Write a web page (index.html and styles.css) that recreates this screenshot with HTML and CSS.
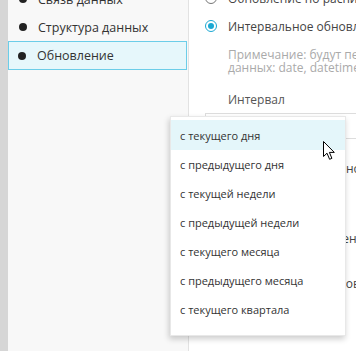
FILE: index.html
```html
<!DOCTYPE html>
<html lang="ru">
<head>
    <meta charset="UTF-8">
    <meta name="viewport" content="width=device-width, initial-scale=1.0">
    <title>Обновление</title>
    <link rel="stylesheet" href="styles.css">
</head>
<body>
    <div class="app">
        <div class="rail"></div>

        <div class="sidebar">
            <ul class="nav">
                <li class="nav-item"><span class="dot"></span>Связь данных</li>
                <li class="nav-item"><span class="dot"></span>Структура данных</li>
                <li class="nav-item active"><span class="dot"></span>Обновление</li>
            </ul>
        </div>

        <div class="main">
            <div class="radio-row">
                <span class="radio"></span>
                <span class="radio-label">Обновление по расписанию</span>
            </div>
            <div class="radio-row">
                <span class="radio checked"></span>
                <span class="radio-label">Интервальное обновление</span>
            </div>
            <p class="note">Примечание: будут перезагружены поля типа<br>данных: date, datetime</p>

            <div class="field-label">Интервал</div>
            <div class="select-box"></div>

            <div class="opt opt-1">Обновлять ежедневно</div>
            <div class="opt opt-2">Дозагружать изменения</div>
            <div class="opt opt-3">Очищать перед обновлением</div>
        </div>
    </div>

    <div class="dropdown">
        <ul class="menu">
            <li class="menu-item hover">с текущего дня</li>
            <li class="menu-item">с предыдущего дня</li>
            <li class="menu-item">с текущей недели</li>
            <li class="menu-item">с предыдущей недели</li>
            <li class="menu-item">с текущего месяца</li>
            <li class="menu-item">с предыдущего месяца</li>
            <li class="menu-item">с текущего квартала</li>
            <li class="menu-item">с предыдущего квартала</li>
            <li class="menu-item">с текущего года</li>
            <li class="menu-item">с предыдущего года</li>
            <li class="menu-item">за последние 7 дней</li>
            <li class="menu-item">за последние 30 дней</li>
            <li class="menu-item">за последние 90 дней</li>
            <li class="menu-item">за всё время</li>
        </ul>
    </div>

    <svg class="cursor" width="13" height="20" viewBox="0 0 13 20">
        <path d="M0.5 0.5 L0.5 15.5 L4 12.2 L6.6 18.3 L8.9 17.3 L6.4 11.4 L11.3 11.4 Z" fill="#fff" stroke="#000" stroke-width="1" stroke-linejoin="miter"/>
    </svg>
</body>
</html>
```

FILE: styles.css
```css
*{
    margin: 0;
    padding: 0;
    box-sizing: border-box;
}
body{
    width: 356px;
    height: 351px;
    overflow: hidden;
    font-family: "Open Sans", "Noto Sans", sans-serif;
    color: #333;
    background: #fff;
}

.app{
    display: flex;
    height: 351px;
}
.rail{
    width: 8px;
    flex: none;
    background-color: #d6d6d6;
}

.sidebar{
    width: 181px;
    flex: none;
    background-color: #f8f8f8;
    border-right: 1px solid #e2e2e2;
}
.nav{
    list-style: none;
    margin-top: -15px;
    padding-right: 1px;
}
.nav-item{
    height: 28px;
    display: flex;
    align-items: center;
    gap: 11px;
    padding-left: 10px;
    font-size: 12.5px;
    color: #333;
    border: 1px solid transparent;
}
.nav-item.active{
    height: 29px;
    background-color: #e6f7fb;
    border-color: #6ccde8;
    padding-left: 9px;
}
.dot{
    width: 8px;
    height: 8px;
    border-radius: 50%;
    background-color: #222;
}

.main{
    flex: none;
    width: 400px;
    padding-left: 16px;
    white-space: nowrap;
}
.radio-row{
    height: 28px;
    display: flex;
    align-items: center;
    gap: 11px;
    font-size: 12px;
    color: #444;
}
.radio-row:first-child{
    margin-top: -16px;
}
.radio{
    width: 12px;
    height: 12px;
    border-radius: 50%;
    border: 1px solid #777;
    background: #fff;
    display: flex;
    align-items: center;
    justify-content: center;
}
.radio.checked{
    border-color: #1ba8d3;
}
.radio.checked::after{
    content: "";
    width: 6px;
    height: 6px;
    border-radius: 50%;
    background-color: #1ba8d3;
}
.note{
    margin: 8px 0 0 23px;
    font-size: 12px;
    line-height: 13px;
    color: #aaa;
}
.field-label{
    margin: 17px 0 0 23px;
    font-size: 12px;
    line-height: 18px;
    color: #555;
}
.select-box{
    height: 26px;
    margin: 4px 0 0 0;
    width: 300px;
    border: 1px solid #ddd;
}
.opt{
    margin-left: 23px;
    font-size: 12px;
    line-height: 18px;
    color: #444;
}
.opt-1{ margin-top: 21px; }
.opt-2{ margin-top: 52px; }
.opt-3{ margin-top: 27px; }

.dropdown{
    position: absolute;
    left: 170px;
    top: 116px;
    width: 176px;
    height: 220px;
    padding: 3px 0 4px;
    background: #fff;
    border: 1px solid #e8e8e8;
    box-shadow: -1px 3px 6px rgba(0, 0, 0, 0.2);
}
.menu{
    list-style: none;
    height: 211px;
    overflow-y: scroll;
}
.menu::-webkit-scrollbar{
    width: 5px;
}
.menu::-webkit-scrollbar-track{
    background: transparent;
}
.menu::-webkit-scrollbar-thumb{
    background-color: #c8ccd2;
    border-right: 1px solid #fff;
}
.menu-item{
    height: 29px;
    display: flex;
    align-items: center;
    padding-left: 9px;
    font-size: 11px;
    color: #333;
    white-space: nowrap;
}
.menu-item.hover{
    height: 30px;
    background-color: #e4f6fa;
}

.cursor{
    position: absolute;
    left: 323px;
    top: 141px;
}
```
